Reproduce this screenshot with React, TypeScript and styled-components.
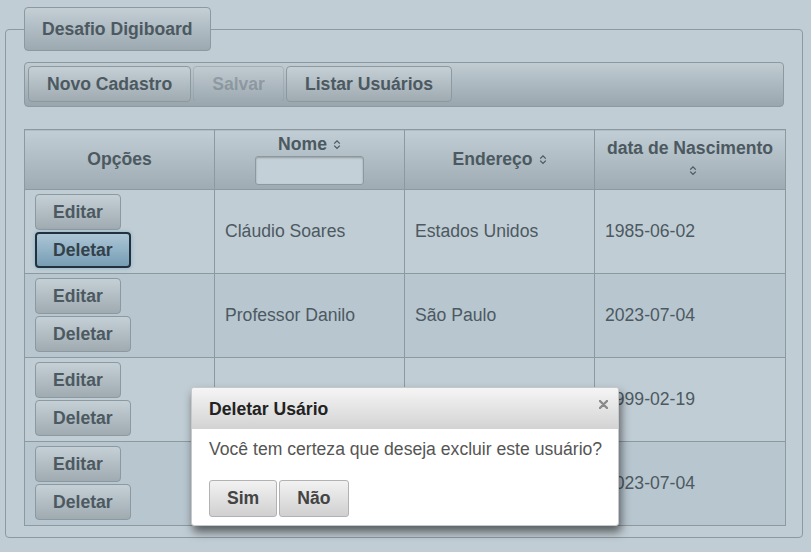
import React from "react";
import styled, { createGlobalStyle, css } from "styled-components";

const Global = createGlobalStyle`
  html, body { margin: 0; padding: 0; background: #c1cdd4; }
  body { font-family: "Liberation Sans", Arial, sans-serif; color: #4c5961; }
  * { box-sizing: border-box; }
`;

const Page = styled.div`
  position: relative;
  width: 811px;
  height: 552px;
  padding: 7px 8px 0 5px;
  background: #c1cdd4;
  overflow: hidden;
`;

const Fieldset = styled.fieldset`
  margin: 0;
  border: 1px solid #8c999f;
  border-radius: 4px;
  padding: 0 18px 11px 18px;
  min-width: 0;
`;

const Legend = styled.legend`
  padding: 0 17px;
  height: 44px;
  line-height: 42px;
  border: 1px solid #8c999f;
  border-radius: 4px;
  background: linear-gradient(#c3ced5, #9ca9b0);
  font-size: 17.6px;
  font-weight: bold;
  color: #4c5961;
`;

const Toolbar = styled.div`
  margin-top: 11px;
  display: flex;
  gap: 2px;
  padding: 3px 3px 4px;
  border: 1px solid #8c999f;
  border-radius: 4px;
  background: linear-gradient(#c0cbd2, #99a6ad);
`;

const Button = styled.button<{ $disabled?: boolean; $active?: boolean }>`
  font-family: "Liberation Sans", Arial, sans-serif;
  font-weight: bold;
  font-size: 17.6px;
  line-height: 20px;
  padding: 7px 17px;
  color: #4c5961;
  border: 1px solid #8c999f;
  border-radius: 4px;
  background: linear-gradient(#c5d0d6, #9faab1);
  cursor: pointer;
  ${(p) =>
    p.$disabled &&
    css`
      color: rgba(76, 89, 97, 0.35);
      border-color: rgba(140, 153, 159, 0.4);
      background: linear-gradient(rgba(197, 208, 214, 0.35), rgba(159, 170, 177, 0.35));
      cursor: default;
    `}
  ${(p) =>
    p.$active &&
    css`
      border: 2px solid #22313b;
      padding: 6px 16px;
      background: linear-gradient(#acc6d6, #779db4);
      color: #33414a;
      box-shadow: 0 0 4px rgba(120, 170, 200, 0.8);
    `}
`;

const ToolButton = styled(Button)`
  padding: 7px 18px;
`;

const Table = styled.table`
  margin-top: 22px;
  width: 761px;
  table-layout: fixed;
  border-collapse: collapse;
  font-size: 17.6px;
`;

const Th = styled.th`
  border: 1px solid #8c999f;
  background: linear-gradient(#c2ced5, #9eabb2);
  padding: 3px 10px 4px;
  font-weight: bold;
  line-height: 22px;
  text-align: center;
  vertical-align: middle;
  color: #4c5961;
`;

const HeadLabel = styled.span`
  white-space: nowrap;
`;

const FilterInput = styled.input`
  display: block;
  margin: 1px auto 0;
  width: 109px;
  height: 29px;
  border: 1px solid #8c999f;
  border-radius: 3px;
  background: #c4d0d7;
  box-shadow: inset 0 1px 2px rgba(0, 0, 0, 0.25);
`;

const Row = styled.tr<{ $alt?: boolean }>`
  background: ${(p) => (p.$alt ? "#b8c6cf" : "#c1cdd5")};
`;

const Td = styled.td`
  border: 1px solid #8c999f;
  padding: 4px 10px 5px;
  vertical-align: middle;
  line-height: 20px;
  color: #4c5961;
`;

const Stack = styled.div`
  display: flex;
  flex-direction: column;
  align-items: flex-start;
  gap: 2px;
`;

const SortIconSvg = styled.svg`
  display: inline-block;
  vertical-align: middle;
  margin-left: 6px;
  margin-top: -2px;
`;

const SortIcon = () => (
  <SortIconSvg width="8" height="11" viewBox="0 0 8 11">
    <path d="M1.2 4.6 L4 1.8 L6.8 4.6" fill="none" stroke="#4c5961" strokeWidth="1.3" />
    <path d="M1.2 6.6 L4 9.4 L6.8 6.6" fill="none" stroke="#4c5961" strokeWidth="1.3" />
  </SortIconSvg>
);

const Dialog = styled.div`
  position: absolute;
  left: 191px;
  top: 387px;
  width: 428px;
  height: 139px;
  background: #ffffff;
  border: 1px solid #c8c8c8;
  border-radius: 3px;
  box-shadow: 2px 6px 10px rgba(0, 0, 0, 0.55);
  display: flex;
  flex-direction: column;
`;

const DialogHeader = styled.div`
  flex-shrink: 0;
  height: 41px;
  display: flex;
  align-items: center;
  justify-content: space-between;
  padding: 0 10px 0 17px;
  background: linear-gradient(#f5f5f5, #d3d3d3);
  border-radius: 3px 3px 0 0;
`;

const DialogTitle = styled.span`
  font-size: 17.6px;
  font-weight: bold;
  color: #222;
  margin-top: 2px;
`;

const CloseBtn = styled.svg`
  align-self: flex-start;
  margin-top: 12px;
`;

const DialogBody = styled.div`
  padding: 10px 10px 0 17px;
  font-size: 17.6px;
  line-height: 20px;
  color: #555;
  white-space: nowrap;
`;

const DialogFooter = styled.div`
  display: flex;
  gap: 2px;
  padding: 21px 17px 0;
`;

const DialogButton = styled.button`
  font-family: "Liberation Sans", Arial, sans-serif;
  font-size: 17.6px;
  font-weight: bold;
  line-height: 21px;
  padding: 7px 17px;
  color: #444;
  border: 1px solid #b2b2b2;
  border-radius: 3px;
  background: linear-gradient(#f2f2f2, #d0d0d0);
`;

const rows = [
  { nome: "Cláudio Soares", end: "Estados Unidos", data: "1985-06-02" },
  { nome: "Professor Danilo", end: "São Paulo", data: "2023-07-04" },
  { nome: "Maria Oliveira", end: "Rio de Janeiro", data: "1999-02-19" },
  { nome: "Ana Costa", end: "Curitiba", data: "2023-07-04" },
];

export default function App() {
  return (
    <Page>
      <Global />
      <Fieldset>
        <Legend>Desafio Digiboard</Legend>
        <Toolbar>
          <ToolButton>Novo Cadastro</ToolButton>
          <ToolButton $disabled>Salvar</ToolButton>
          <ToolButton>Listar Usuários</ToolButton>
        </Toolbar>
        <Table>
          <colgroup>
            <col style={{ width: 190 }} />
            <col style={{ width: 190 }} />
            <col style={{ width: 190 }} />
            <col style={{ width: 191 }} />
          </colgroup>
          <thead>
            <tr>
              <Th>Opções</Th>
              <Th>
                <HeadLabel>
                  Nome<SortIcon />
                </HeadLabel>
                <FilterInput />
              </Th>
              <Th>
                <HeadLabel>
                  Endereço<SortIcon />
                </HeadLabel>
              </Th>
              <Th>
                data de Nascimento
                <br />
                <SortIcon />
              </Th>
            </tr>
          </thead>
          <tbody>
            {rows.map((r, i) => (
              <Row key={i} $alt={i % 2 === 1}>
                <Td>
                  <Stack>
                    <Button>Editar</Button>
                    <Button $active={i === 0}>Deletar</Button>
                  </Stack>
                </Td>
                <Td>{r.nome}</Td>
                <Td>{r.end}</Td>
                <Td>{r.data}</Td>
              </Row>
            ))}
          </tbody>
        </Table>
      </Fieldset>
      <Dialog>
        <DialogHeader>
          <DialogTitle>Deletar Usário</DialogTitle>
          <CloseBtn width="9" height="9" viewBox="0 0 9 9">
            <path d="M1 1 L8 8 M8 1 L1 8" stroke="#8a8a8a" strokeWidth="2.4" strokeLinecap="round" />
          </CloseBtn>
        </DialogHeader>
        <DialogBody>Você tem certeza que deseja excluir este usuário?</DialogBody>
        <DialogFooter>
          <DialogButton>Sim</DialogButton>
          <DialogButton>Não</DialogButton>
        </DialogFooter>
      </Dialog>
    </Page>
  );
}
